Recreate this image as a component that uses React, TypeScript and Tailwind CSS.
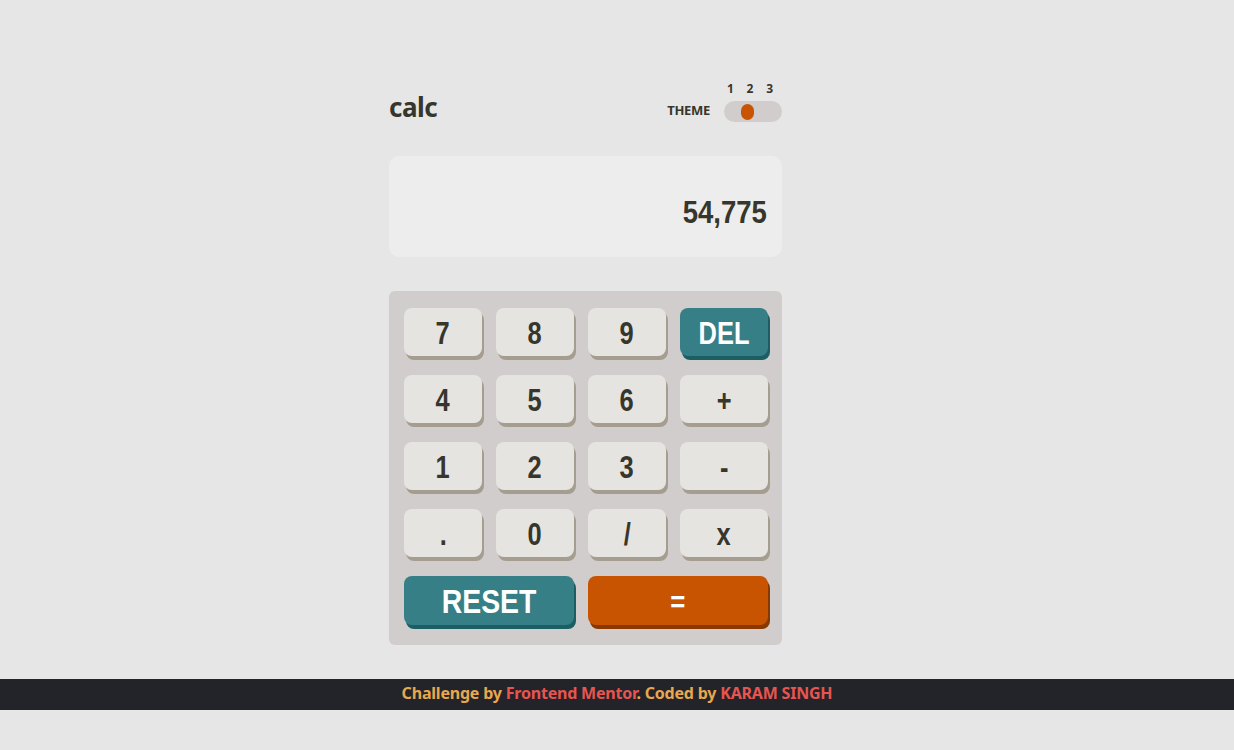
import React from "react";

const keys = [
  ["7", "8", "9", "DEL"],
  ["4", "5", "6", "+"],
  ["1", "2", "3", "-"],
  [".", "0", "/", "x"],
];

const narrow = { fontFamily: '"Liberation Sans", Arial, sans-serif' };

const Key = ({ label }: { label: string }) => {
  const isDel = label === "DEL";
  return (
    <button
      className={`h-[48px] rounded-[8px] flex items-center justify-center pt-[3px] text-[31px] ${
        isDel
          ? "bg-[#377f86] text-white shadow-[2px_4px_0_#1b5f65]"
          : "bg-[#e5e4e1] text-[#36362c] shadow-[2px_4px_0_#a69d91]"
      }`}
      style={narrow}
    >
      <span className="inline-block font-bold leading-none scale-x-[0.82]">{label}</span>
    </button>
  );
};

const App = () => {
  return (
    <div className="min-h-[750px] bg-[#e6e6e6] flex flex-col">
      <main className="flex justify-center pt-[80px] pr-[63px]">
        <div className="w-[393px] flex flex-col">
          {/* header */}
          <div className="flex justify-between items-end h-[42px]" style={{ fontFamily: '"Noto Sans", sans-serif' }}>
            <h1 className="text-[26px] font-bold text-[#36362c] leading-none mb-[2px] tracking-[-0.5px]">calc</h1>
            <div className="flex items-end gap-[14px]">
              <span className="text-[13px] font-bold text-[#36362c] leading-none mb-[5px] tracking-[-0.3px]">THEME</span>
              <div className="flex flex-col items-stretch">
                <div className="flex justify-between pl-[3px] pr-[9px] text-[12px] font-bold text-[#36362c] leading-none mb-[6px]">
                  <span>1</span>
                  <span>2</span>
                  <span>3</span>
                </div>
                <div className="w-[58px] h-[21px] rounded-full bg-[#d2cdcd] flex items-center pl-[17px]">
                  <div className="w-[13px] h-[16px] rounded-full bg-[#c85402]" />
                </div>
              </div>
            </div>
          </div>

          {/* display */}
          <div className="mt-[34px] h-[101px] rounded-[10px] bg-[#ededed] flex items-center justify-end pr-[15px] pt-[10px]">
            <span
              className="inline-block origin-right scale-x-[0.86] text-[32px] font-bold text-[#36362c] leading-none"
              style={narrow}
            >
              54,775
            </span>
          </div>

          {/* keypad */}
          <div className="mt-[34px] h-[354px] rounded-[6px] bg-[#d2cdcd] pt-[17px] pl-[15px] pr-[12px]">
            <div className="grid grid-cols-[78px_78px_78px_88px] gap-x-[14px] gap-y-[19px]">
              {keys.flat().map((k) => (
                <Key key={k} label={k} />
              ))}
              <button
                className="col-span-2 h-[49px] rounded-[8px] bg-[#377f86] text-white shadow-[2px_4px_0_#1b5f65] flex items-center justify-center pt-[2px]"
                style={narrow}
              >
                <span className="inline-block scale-x-[0.86] text-[33px] font-bold leading-none">RESET</span>
              </button>
              <button
                className="col-span-2 h-[49px] rounded-[8px] bg-[#c85402] text-white shadow-[2px_4px_0_#873901] flex items-center justify-center pt-[2px]"
                style={narrow}
              >
                <span className="inline-block scale-x-[0.86] text-[30px] font-bold leading-none">=</span>
              </button>
            </div>
          </div>
        </div>
      </main>

      <footer
        className="mt-[34px] h-[31px] bg-[#23232a] flex items-center justify-center pb-[3px] text-[16px] font-bold text-[#e8a84e] tracking-[-0.2px]"
        style={{ fontFamily: '"Noto Sans", sans-serif' }}
      >
        <span>
          Challenge by <span className="text-[#e8554f]">Frontend Mentor</span>. Coded by{" "}
          <span className="text-[#e8554f]">KARAM SINGH</span>
        </span>
      </footer>
    </div>
  );
};

export default App;
